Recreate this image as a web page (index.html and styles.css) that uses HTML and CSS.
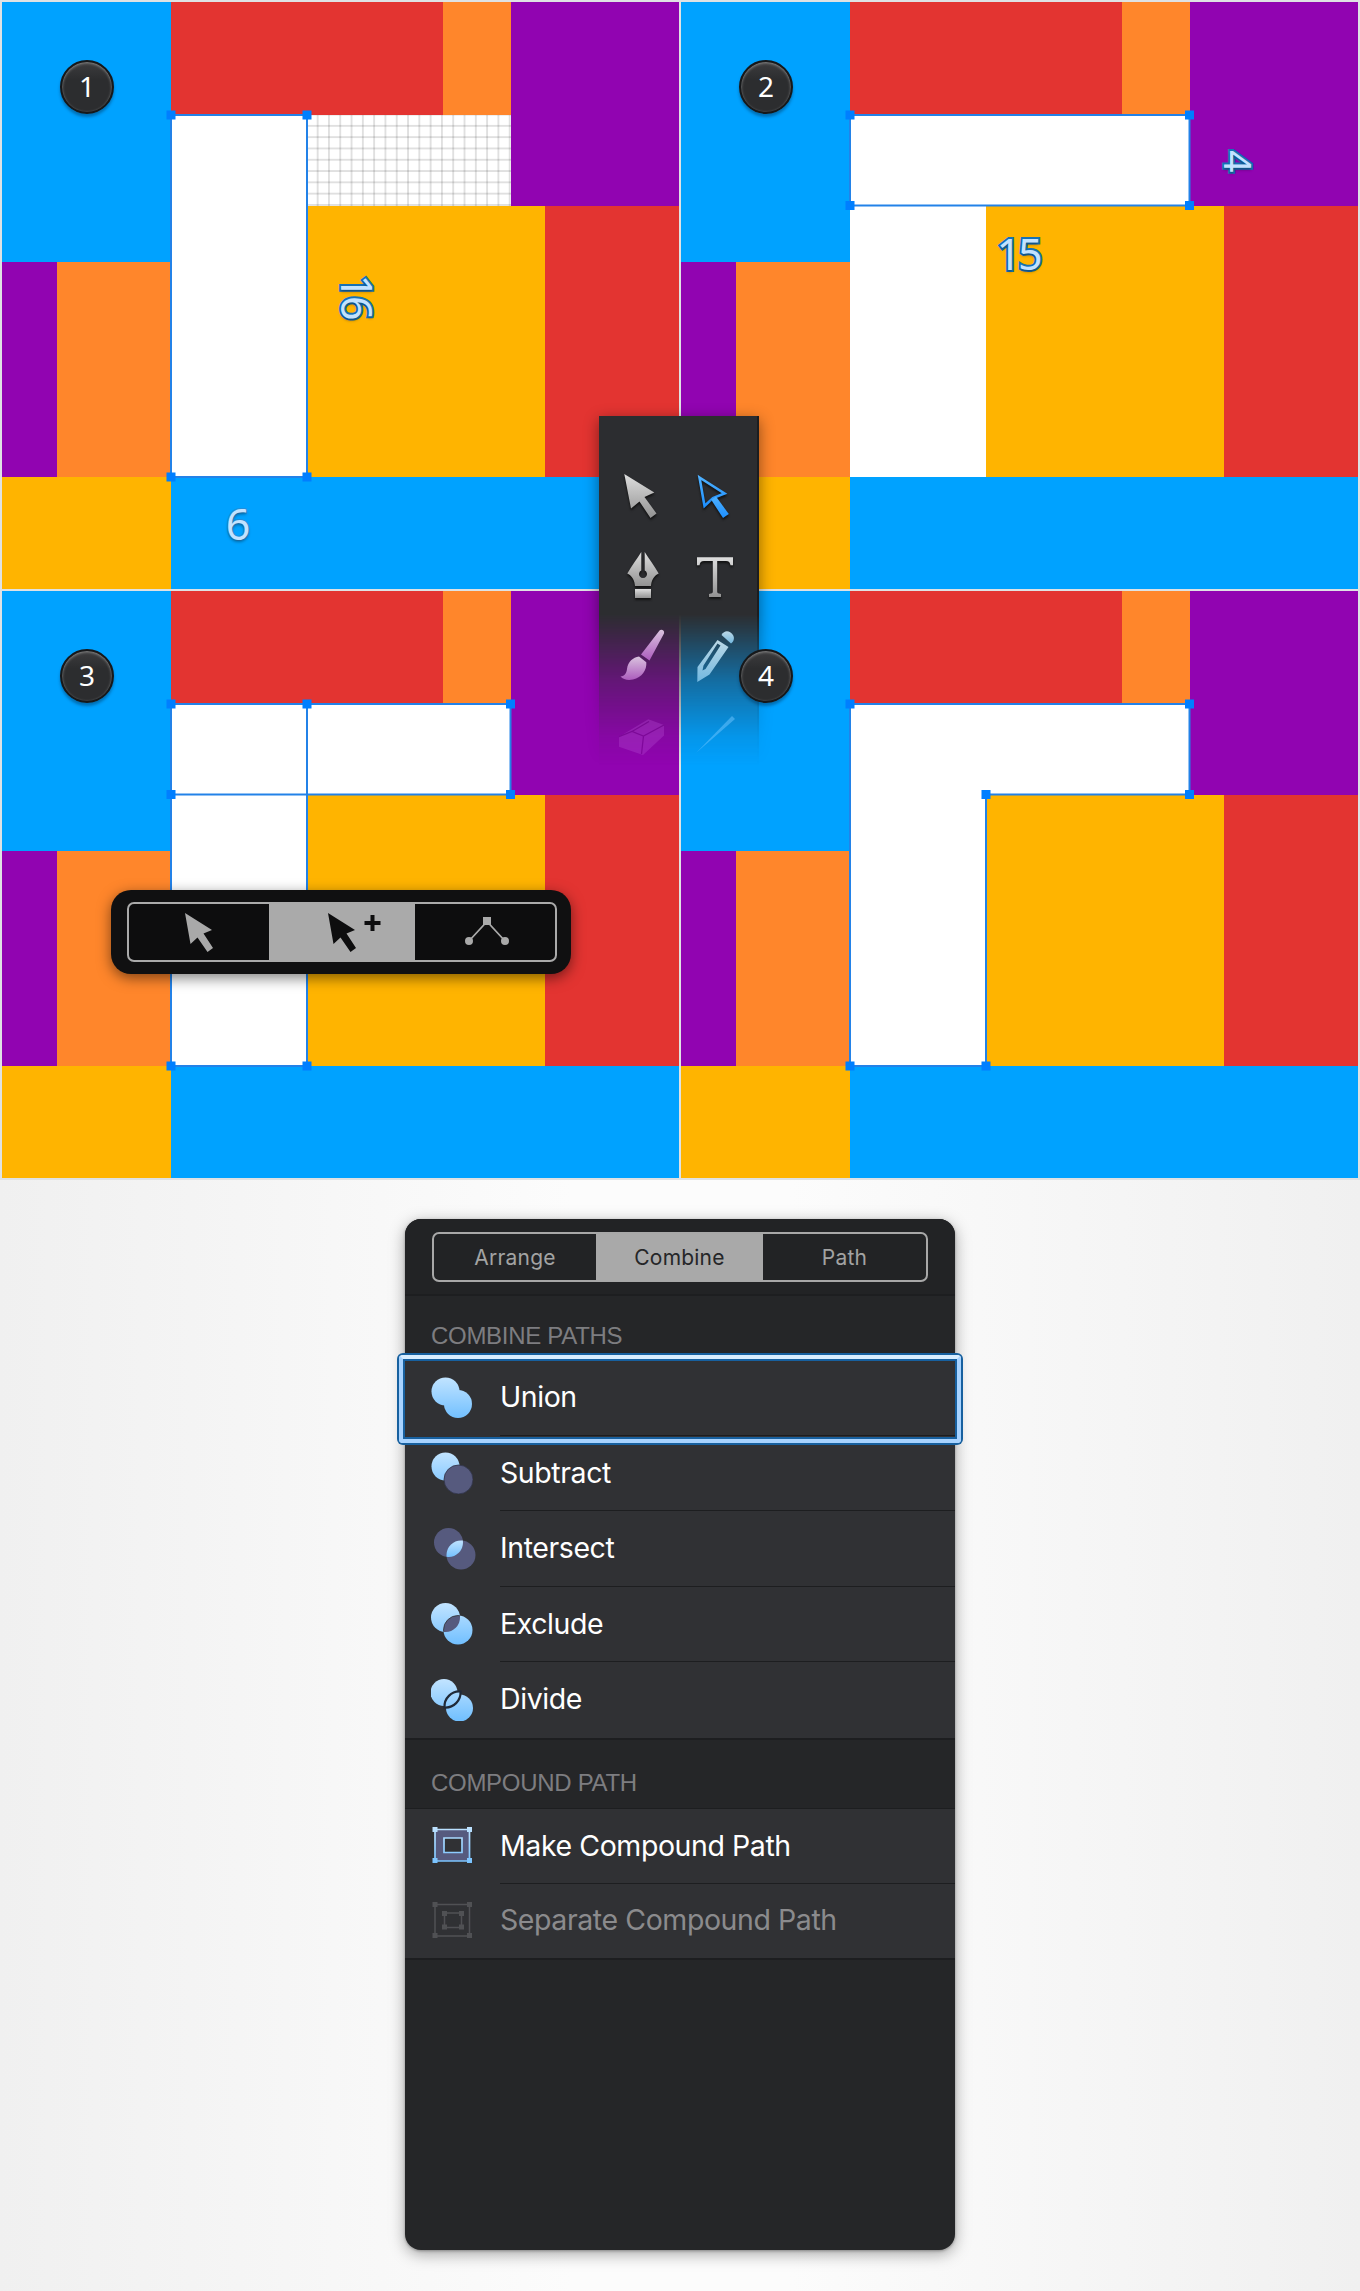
FILE: index.html
```html
<!DOCTYPE html>
<html lang="en">
<head>
<meta charset="utf-8">
<title>Combine paths</title>
<link rel="stylesheet" href="styles.css">
</head>
<body>
<main class="page">
  <section class="boards">
    <div class="board">
      <i class="blue tl"></i><i class="red top"></i><i class="orange top2"></i><i class="purple tr"></i>
      <i class="white bar"></i><i class="mesh"></i><i class="purple l1"></i><i class="orange l2"></i>
      <i class="yellow mid"></i><i class="red right"></i><i class="yellow bl"></i><i class="blue foot"></i>
      <svg class="sel" viewBox="0 0 677 587"><rect x="169" y="113" width="136" height="362"/><path class="node" d="M164.500 108.500h9v9h-9zM300.500 108.500h9v9h-9zM164.500 470.500h9v9h-9zM300.500 470.500h9v9h-9z"/></svg>
      <span class="badge">1</span>
      <span class="size s16">16</span><span class="size s6">6</span>
    </div>
    <div class="board">
      <i class="blue tl"></i><i class="red top"></i><i class="orange top2"></i><i class="purple tr"></i>
      <i class="white bar"></i><i class="white mesh2"></i><i class="purple l1"></i><i class="orange l2"></i>
      <i class="yellow mid"></i><i class="red right"></i><i class="yellow bl"></i><i class="blue foot"></i>
      <svg class="sel" viewBox="0 0 677 587"><rect x="169" y="113" width="339.500" height="90.500"/><path class="node" d="M164.500 108.500h9v9h-9zM504 108.500h9v9h-9zM164.500 199h9v9h-9zM504 199h9v9h-9z"/></svg>
      <span class="badge">2</span>
      <span class="size s15">15</span><span class="size s4">4</span>
    </div>
    <div class="board">
      <i class="blue tl"></i><i class="red top"></i><i class="orange top2"></i><i class="purple tr"></i>
      <i class="white bar"></i><i class="white mesh2"></i><i class="purple l1"></i><i class="orange l2"></i>
      <i class="yellow mid"></i><i class="red right"></i><i class="yellow bl"></i><i class="blue foot"></i>
      <svg class="sel" viewBox="0 0 677 587"><rect x="169" y="113" width="136" height="362"/><rect x="169" y="113" width="339.500" height="90.500"/><path class="node" d="M164.500 108.500h9v9h-9zM300.500 108.500h9v9h-9zM504 108.500h9v9h-9zM164.500 199h9v9h-9zM504 199h9v9h-9zM164.500 470.500h9v9h-9zM300.500 470.500h9v9h-9z"/></svg>
      <span class="badge">3</span>
    </div>
    <div class="board">
      <i class="blue tl"></i><i class="red top"></i><i class="orange top2"></i><i class="purple tr"></i>
      <i class="white bar"></i><i class="white mesh2"></i><i class="purple l1"></i><i class="orange l2"></i>
      <i class="yellow mid"></i><i class="red right"></i><i class="yellow bl"></i><i class="blue foot"></i>
      <svg class="sel" viewBox="0 0 677 587"><path d="M169 113H508.500V203.500H305V475H169z"/><path class="node" d="M164.500 108.500h9v9h-9zM504 108.500h9v9h-9zM504 199h9v9h-9zM300.500 199h9v9h-9zM164.500 470.500h9v9h-9zM300.500 470.500h9v9h-9z"/></svg>
      <span class="badge over">4</span>
    </div>

    <div class="toolbox">
      <div class="fade"></div>
      <svg class="tools" width="160" height="350" viewBox="0 0 160 350">
        <defs>
          <linearGradient id="steel" x1="0" y1="0" x2="0" y2="1"><stop offset="0" stop-color="#dedede"/><stop offset="1" stop-color="#929292"/></linearGradient>
          <linearGradient id="azure" x1="0" y1="0" x2="0" y2="1"><stop offset="0" stop-color="#4db0ff"/><stop offset="1" stop-color="#1e90ff"/></linearGradient>
          <linearGradient id="brush" x1="0" y1="0" x2="0" y2="1"><stop offset="0" stop-color="#d9c3de"/><stop offset="1" stop-color="#ac5cbd"/></linearGradient>
          <linearGradient id="pencil" x1="0" y1="0" x2="0" y2="1"><stop offset="0" stop-color="#bcd8e6"/><stop offset="1" stop-color="#72b8e0"/></linearGradient>
        </defs>
        <g class="lift" fill="url(#steel)">
          <path d="M25.300 58L55.300 76.500 45.500 81 57.500 97.500 51.500 102 40.500 85.500 32 92.500z"/>
          <path d="M42.300 136V154.500a4 4 0 1 0 3.400 0V136C50 143 55.500 150 59.700 157.500 54.500 160 52.300 165 52 170H36C35.700 165 33.500 160 28.300 157.500 32.500 150 38 143 42.300 136z"/>
          <path d="M36 173h16v9H36z"/>
          <path d="M98 141.200H134V149.200H131.500C131 146.500 130 145 127 145H118.200V175.500C118.200 177 119 177.500 122 178V181H110V178C113 177.500 113.800 177 113.800 175.500V145H105C102 145 101 146.500 100.500 149.200H98z"/>
        </g>
        <path class="lift" d="M100.500 61.500L125.500 77.500 114 82 105.500 90z" fill="none" stroke="url(#azure)" stroke-width="2.600"/>
        <path class="lift" d="M112 83.500L117 80.500 129.800 98 124 102z" fill="url(#azure)"/>
        <g fill="url(#brush)">
          <path d="M60.500 214.500C62 213 66 214 65 217.500L50.500 244.500 47 242 42 238.500z"/>
          <path d="M40 240.500L47.300 246.300C48 254 43 261.500 34 263.500 29 264.700 24 263.500 21.500 260.500 26 260 27.500 257 28 253 29 245.500 34 241.500 40 240.500z"/>
        </g>
        <g fill="url(#pencil)">
          <path d="M122.500 219C125.500 213.500 131 214.500 134 219 136 222 134.500 226 132 227.500z"/>
          <path fill-rule="evenodd" d="M118.500 224L129.500 231 110.500 258.500 98.300 266 98.500 251zM118.500 227.500L104.500 249.500 103.500 254.500 106.500 253 121.500 229.500z"/>
        </g>
        <g opacity=".32"><path d="M20 320.700L49.300 303.300 65 309V319.500L44 339 20 330.700z" fill="#b84fd6"/><path d="M20 320.700L33 315.500 44.500 320 65 309M44.500 320L42.500 338M33 315.500L50 305.500" stroke="#6d0a86" stroke-width="1.300" fill="none"/></g>
        <path d="M97 337L133 300 136 303z" fill="#6fc6ff" opacity=".5"/>
      </svg>
    </div>

    <div class="modebar">
      <div class="modes">
        <div class="mode"><svg width="30" height="42" viewBox="0 0 30 42"><path fill="#a9a9a9" d="M1 1L28 18 19.500 21.500 29 36 23.500 40 13.500 25.500 6.500 32z"/></svg></div>
        <div class="mode on"><svg width="54" height="42" viewBox="0 0 54 42"><path fill="#0d0d0e" d="M1 1L28 18 19.500 21.500 29 36 23.500 40 13.500 25.500 6.500 32zM43.500 3h4v6h6v4h-6v6h-4v-6h-6v-4h6z"/></svg></div>
        <div class="mode"><svg width="46" height="42" viewBox="0 0 46 42"><path d="M5 29L23 9.500 41 29" stroke="#a9a9a9" stroke-width="1.800" fill="none"/><path fill="#a9a9a9" d="M19 5h8v8h-8zM1 29a4 4 0 1 0 8 0a4 4 0 1 0-8 0M37 29a4 4 0 1 0 8 0a4 4 0 1 0-8 0"/></svg></div>
      </div>
    </div>
  </section>

  <section class="panel">
    <svg class="defs" width="0" height="0"><defs>
      <linearGradient id="sky" gradientUnits="userSpaceOnUse" x1="0" y1="0" x2="0" y2="42"><stop offset="0" stop-color="#c2e4ff"/><stop offset="1" stop-color="#70bfff"/></linearGradient>
      <linearGradient id="lens" gradientUnits="userSpaceOnUse" x1="0" y1="12" x2="0" y2="30"><stop offset="0" stop-color="#c2e4ff"/><stop offset="1" stop-color="#70bfff"/></linearGradient>
      <clipPath id="first"><circle cx="14.500" cy="14.500" r="14.500"/></clipPath>
    </defs></svg>
    <header class="tabs"><div class="seg"><span>Arrange</span><span class="on">Combine</span><span>Path</span></div></header>
    <h2>COMBINE PATHS</h2>
    <ul>
      <li class="picked"><svg viewBox="0 0 42 42"><g fill="url(#sky)"><circle cx="14.500" cy="14.500" r="14"/><circle cx="27" cy="27" r="14"/></g></svg><span>Union</span></li>
      <li><svg viewBox="0 0 42 42"><circle cx="14.500" cy="14.500" r="14" fill="url(#sky)"/><circle cx="27.500" cy="27.500" r="14.500" fill="#565a7e" stroke="#303349" stroke-width=".8"/></svg><span>Subtract</span></li>
      <li><svg class="shift" viewBox="0 0 42 42"><g fill="#565a7e"><circle cx="14.500" cy="14.500" r="14.500"/><circle cx="27" cy="27" r="14.500"/></g><circle cx="27" cy="27" r="14.500" fill="url(#lens)" clip-path="url(#first)"/></svg><span>Intersect</span></li>
      <li><svg viewBox="0 0 42 42"><g fill="url(#sky)"><circle cx="14.500" cy="14.500" r="14.500"/><circle cx="27" cy="27" r="14.500"/></g><g clip-path="url(#first)"><circle cx="27" cy="27" r="14.500" fill="#565a7e" stroke="#303133" stroke-width=".8"/></g></svg><span>Exclude</span></li>
      <li><svg viewBox="0 0 42 42"><g fill="url(#sky)"><circle cx="13" cy="13.500" r="13.500"/><circle cx="28.500" cy="29" r="13.500"/></g><path d="M13.500 28.500A15 15 0 0 1 29.500 12.500A15 15 0 0 1 13.500 28.500z" fill="url(#sky)" stroke="#202a38" stroke-width="2.200"/></svg><span>Divide</span></li>
    </ul>
    <h2 class="second">COMPOUND PATH</h2>
    <ul class="compound">
      <li><svg viewBox="0 0 42 42"><path d="M4 4.500h34.500v31.500h-34.500zM13 13h18v14.500h-18z" fill-rule="evenodd" fill="#565a7e" stroke="url(#sky)" stroke-width="1.700"/><path fill="url(#sky)" d="M1.500 2h5v5h-5zM36 2h5v5h-5zM1.500 33h5v5h-5zM36 33h5v5h-5z"/></svg><span>Make Compound Path</span></li>
      <li class="off"><svg viewBox="0 0 42 42"><path d="M4 4.500h34.500v31.500h-34.500zM13.500 13h17v14.500h-17z" fill="none" stroke="#505154" stroke-width="1.500"/><path fill="#505154" d="M1.500 2h5v5h-5zM36 2h5v5h-5zM1.500 33h5v5h-5zM36 33h5v5h-5zM11 11h5v5h-5zM28 11h5v5h-5zM11 24.500h5v5h-5zM28 24.500h5v5h-5z"/></svg><span>Separate Compound Path</span></li>
    </ul>
  </section>
</main>
</body>
</html>
```
FILE: styles.css
```css
* { box-sizing: border-box; }
body { margin: 0; font-family: Inter, "Liberation Sans", sans-serif; }
.page { height: 2291px; overflow: hidden; background: linear-gradient(90deg, #f0f0f0, #fcfcfc 42%, #fcfcfc 58%, #f0f0f0); }
.boards { position: relative; display: grid; grid-template-columns: 677px 677px; grid-template-rows: 587px 587px; gap: 2px; padding: 2px; height: 1180px; background: #dfe2e4; }
.board { position: relative; display: grid; grid-template-columns: 55px 114px 136px 135.5px 68px 34px 134.5px; grid-template-rows: 113px 90.5px 56.5px 215px 112px; }
.blue { background: #00a2ff; } .red { background: #e33431; } .orange { background: #ff862b; }
.purple { background: #9104b1; } .yellow { background: #ffb400; } .white { background: #fff; }
.tl { grid-area: 1 / 1 / 4 / 3; }
.top { grid-area: 1 / 3 / 2 / 5; }
.top2 { grid-area: 1 / 5 / 2 / 6; }
.tr { grid-area: 1 / 6 / 3 / 8; }
.bar { grid-area: 2 / 3 / 5 / 4; }
.mesh, .mesh2 { grid-area: 2 / 4 / 3 / 6; }
.mesh { background: linear-gradient(90deg, transparent 9.6px, rgba(0, 0, 0, .12) 9.6px) .3px 0 / 11.31px 11.31px, linear-gradient(transparent 9.6px, rgba(0, 0, 0, .12) 9.6px) 0 .5px / 11.31px 11.31px, #fff; }
.l1 { grid-area: 4 / 1 / 5 / 2; }
.l2 { grid-area: 4 / 2 / 5 / 3; }
.mid { grid-area: 3 / 4 / 5 / 7; }
.right { grid-area: 3 / 7 / 5 / 8; }
.bl { grid-area: 5 / 1 / 6 / 3; }
.foot { grid-area: 5 / 3 / 6 / 8; }
.sel { position: absolute; inset: 0; width: 677px; height: 587px; fill: none; stroke: #2382e8; stroke-width: 2; }
.sel .node { fill: #007fff; stroke: none; }
.badge { position: absolute; left: 58px; top: 58px; width: 54px; height: 54px; border-radius: 50%; border: 2px solid #16181a; background: linear-gradient(#3c3c3e, #2c2d2f 35%, #2c2d2f); box-shadow: inset 0 1px 3px #8c8c8c, 0 3px 3px rgba(0, 50, 90, .45); color: #fff; font: 28px/49px "Noto Sans", sans-serif; text-align: center; }
.over { z-index: 4; }
.size { position: absolute; width: 60px; height: 44px; text-align: center; font: 43px/44px "Noto Sans", sans-serif; color: #c2e2ff; -webkit-text-stroke: 4px #1672b8; paint-order: stroke fill; text-shadow: 0 2px 3px rgba(0, 0, 0, .35); letter-spacing: -3px; }
.s16 { left: 325px; top: 271.5px; transform: rotate(90deg); text-shadow: 2px 0 3px rgba(0, 0, 0, .35); }
.s6 { left: 204.5px; top: 499.5px; -webkit-text-stroke: 2px #238fdc; }
.s15 { left: 307px; top: 229.5px; }
.s4 { left: 528px; top: 135.5px; font-size: 39px; transform: rotate(90deg); text-shadow: 2px 0 3px rgba(0, 0, 0, .35); }
.toolbox { position: absolute; z-index: 2; left: 599px; top: 416px; width: 160px; height: 350px; }
.fade { position: absolute; inset: -20px -20px 0; -webkit-mask: linear-gradient(#000 59%, rgba(0, 0, 0, .85) 64%, rgba(0, 0, 0, .45) 77%, rgba(0, 0, 0, .1) 92%, transparent); mask: linear-gradient(#000 59%, rgba(0, 0, 0, .85) 64%, rgba(0, 0, 0, .45) 77%, rgba(0, 0, 0, .1) 92%, transparent); }
.fade::before { content: ""; position: absolute; inset: 20px 20px 0; background: linear-gradient(90deg, transparent 98.7%, #1c1d1f 98.7%), #2c2d30; box-shadow: 0 4px 14px rgba(0, 0, 0, .45); }
.tools { position: relative; display: block; }
.lift { filter: drop-shadow(0 2px 1px #111); }
.modebar { position: absolute; z-index: 2; left: 111px; top: 890px; width: 460px; height: 84px; padding: 12px 14px 12px 16px; border-radius: 20px; background: #101011; box-shadow: 0 4px 14px rgba(0, 0, 0, .5); }
.modes { display: grid; grid-template-columns: 140px 146px 1fr; height: 60px; border: 2px solid #aaa; border-radius: 7px; background: #0d0d0e; }
.mode { display: flex; align-items: center; justify-content: center; padding-top: 2px; }
.mode.on { background: #aaa; margin: -1px 0; padding-left: 24px; }
.mode:last-child { padding-left: 3px; }
.panel { width: 550px; height: 1031px; margin: 39px auto 0; overflow: visible; border-radius: 16px; background: #252628; box-shadow: 0 4px 16px rgba(0, 0, 0, .35), 0 1px 3px rgba(0, 0, 0, .3); }
.panel { width: 519px; width: 550px; }
.defs { position: absolute; }
.tabs { height: 77px; padding: 13px 27px; border-bottom: 2px solid #1d1e20; background: #222325; border-radius: 16px 16px 0 0; }
.seg { display: grid; grid-template-columns: 162px 167px 1fr; height: 50px; border: 2px solid #a8a8a8; border-radius: 7px; font-size: 21px; letter-spacing: .2px; line-height: 47px; text-align: center; color: #a3a3a3; }
.seg .on { background: #a9a9a9; color: #252628; }
h2 { margin: 0; padding: 24px 26px 0; height: 64px; font: 24px/32px "Liberation Sans", sans-serif; letter-spacing: -.3px; color: #7d7d80; }
.second { height: 69px; padding-top: 27px; }
ul { margin: 0; padding: 0; list-style: none; background: #303134; border-bottom: 2px solid #1d1e20; }
li { display: grid; grid-template-columns: 69px 1fr; height: 75.5px; padding-left: 26px; align-items: center; }
.compound { border-top: 1px solid #1d1e20; margin-top: -1px; }
.compound li { height: 74.8px; }
li svg { width: 42px; height: 42px; }
li span { height: 100%; border-bottom: 1px solid #1d1e20; font-size: 28.5px; letter-spacing: -.42px; line-height: 74px; color: #fff; }
li:last-child span { border: 0; }
li svg.shift { margin-left: 3px; }
.off span { color: #8b8b8d; }
.picked { position: relative; }
.picked::after { content: ""; position: absolute; inset: -5px -6px -7.5px; border: 4px solid #a8d3ff; border-top-color: #d8edff; border-radius: 4px; box-shadow: 0 0 0 2px #17609f, inset 0 0 0 2px #17609f; }
```
